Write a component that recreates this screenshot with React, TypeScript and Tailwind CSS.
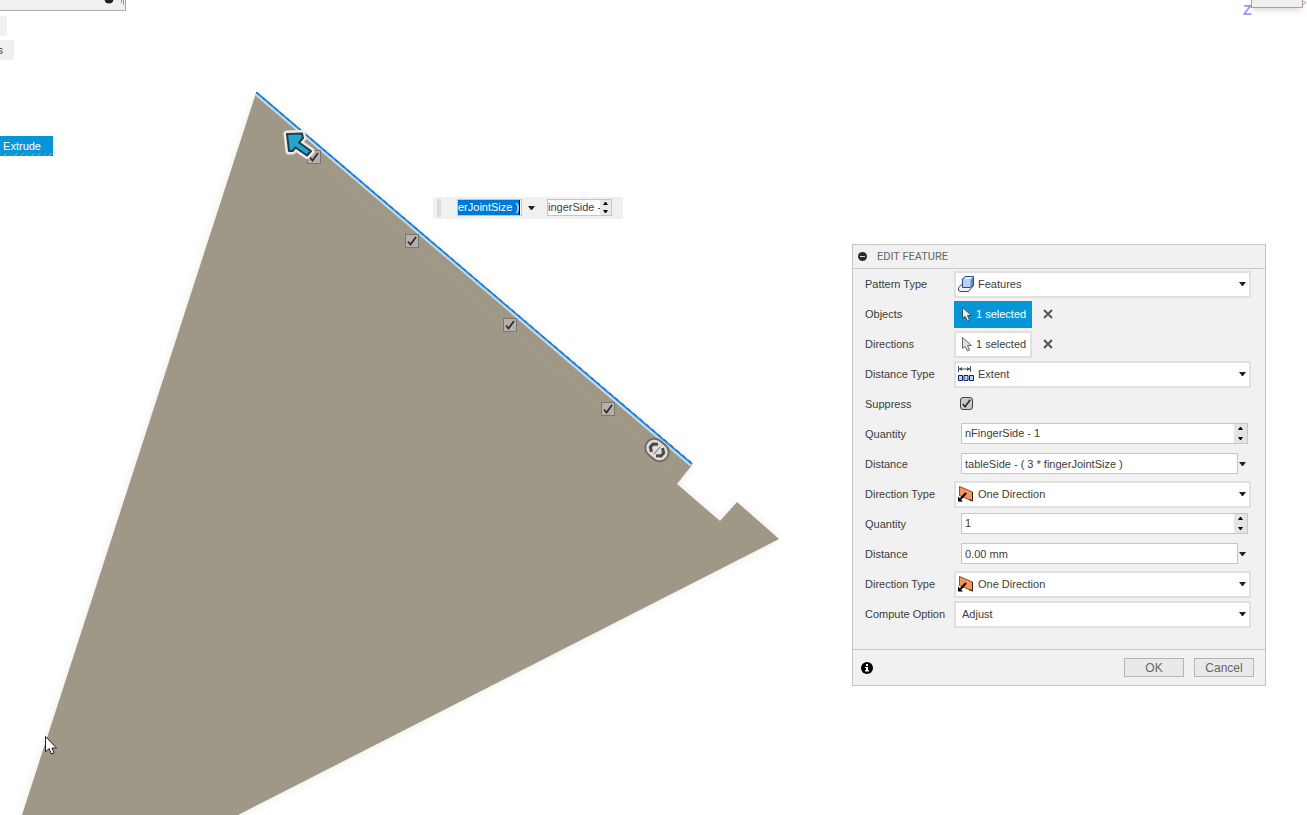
import { ReactNode, useState } from "react";

type RowProps = {
  label: string;
  id: string;
  children: ReactNode;
};

function Row({ label, id, children }: RowProps) {
  return (
    <div className="flex h-[30px] items-center">
      <label htmlFor={id} className="w-[89px] shrink-0">
        {label}
      </label>
      {children}
    </div>
  );
}

function DownArrow() {
  return (
    <svg width="7" height="4" viewBox="0 0 7 4" className="pointer-events-none">
      <path d="M0 0H7L4 4H3Z" fill="#222" />
    </svg>
  );
}

type DropdownProps = {
  id: string;
  value: string;
  icon?: ReactNode;
};

function Dropdown({ id, value, icon }: DropdownProps) {
  return (
    <div className="relative flex flex-1 items-center">
      <select
        id={id}
        className={
          icon
            ? "h-[27px] w-full appearance-none border-2 border-[#e0e0e0] bg-white pl-[22px] outline-none"
            : "h-[27px] w-full appearance-none border-2 border-[#e0e0e0] bg-white pl-1.5 outline-none"
        }
      >
        <option>{value}</option>
      </select>
      {icon && (
        <span className="pointer-events-none absolute left-1">{icon}</span>
      )}
      <span className="pointer-events-none absolute right-[5px]">
        <DownArrow />
      </span>
    </div>
  );
}

function Spinner({ name, className }: { name: string; className: string }) {
  return (
    <div className={`flex shrink-0 flex-col ${className}`}>
      <button
        type="button"
        aria-label={`Increase ${name}`}
        className="flex flex-1 items-center justify-center"
      >
        <svg width="5" height="3" viewBox="0 0 5 3">
          <path d="M2 0H3L5 3H0Z" fill="#000" />
        </svg>
      </button>
      <button
        type="button"
        aria-label={`Decrease ${name}`}
        className="flex flex-1 items-center justify-center"
      >
        <svg width="5" height="3" viewBox="0 0 5 3">
          <path d="M0 0H5L3 3H2Z" fill="#000" />
        </svg>
      </button>
    </div>
  );
}

function QuantityField({ id, initial }: { id: string; initial: string }) {
  const [value, setValue] = useState(initial);
  return (
    <div className="mr-[3px] mb-px ml-[7px] flex h-[21px] flex-1 border border-[#c6c6c6] bg-white">
      <input
        id={id}
        value={value}
        onChange={(e) => setValue(e.target.value)}
        className="min-w-0 flex-1 px-[3px] outline-none"
      />
      <Spinner name="quantity" className="w-[13px] bg-[#e4e4e4]" />
    </div>
  );
}

function DistanceField({ id, initial }: { id: string; initial: string }) {
  const [value, setValue] = useState(initial);
  return (
    <div className="mr-[5px] ml-[7px] flex flex-1 items-center gap-px">
      <input
        id={id}
        value={value}
        onChange={(e) => setValue(e.target.value)}
        className="mb-px h-[21px] min-w-0 flex-1 border border-[#c6c6c6] bg-white px-[3px] outline-none"
      />
      <button type="button" aria-label="Distance options">
        <DownArrow />
      </button>
    </div>
  );
}

function Selection({ id, active }: { id: string; active?: boolean }) {
  return (
    <div className="flex items-center gap-[11px]">
      <button
        id={id}
        type="button"
        className={
          active
            ? "flex h-[27px] w-[78px] items-center gap-1 border-2 border-[#0696d7] bg-[#0696d7] pl-1.5 text-white"
            : "flex h-[27px] w-[78px] items-center gap-1 border-2 border-[#e0e0e0] bg-white pl-1.5"
        }
      >
        <svg width="10" height="16" viewBox="0 0 10 16">
          <path
            d="M.5 1.5V12.500L3 10.300L5.500 15L7.500 14L5.500 9.500H9.500Z"
            fill={active ? "#f4f0ec" : "#e2dfe4"}
            stroke={active ? "#35526b" : "#66666e"}
          />
        </svg>
        <span className="whitespace-nowrap">1 selected</span>
      </button>
      <button type="button" aria-label="Clear selection">
        <svg width="10" height="10" viewBox="0 0 10 10">
          <path d="M1 1L9 9M9 1L1 9" stroke="#555" strokeWidth="2" />
        </svg>
      </button>
    </div>
  );
}

function FeaturesIcon() {
  return (
    <svg width="16" height="16" viewBox="0 0 16 16">
      <path d="M.5 14.5V11.5L5 7.500H13L15.5 9.500L10.500 15.5H2Z" fill="#eef1f6" stroke="#3d4652" />
      <path d="M4.5 3L7 .5H15.5V9L12.5 11.5H4.5Z" fill="#5f8fd0" stroke="#274a80" />
      <path d="M5 3.500H12.5V11H5Z" fill="#b4d3f7" />
      <path d="M7.5 1H15L12.5 3.500H5.5Z" fill="#e0edfc" />
    </svg>
  );
}

function ExtentIcon() {
  return (
    <svg width="16" height="16" viewBox="0 0 16 16" fill="none">
      <path d="M.5 0V6M12.500 0V6" stroke="#3b5166" />
      <path d="M1 3H12" stroke="#3b5166" strokeWidth="1" />
      <path d="M1 3L4 1V5ZM12 3L9 1V5Z" fill="#3b5166" />
      <path
        d="M.5 9.5H4.500V14.5H.5ZM6 9.5H10V14.5H6ZM11.500 9.5H15.5V14.5H11.500Z"
        fill="#b7d2f5"
        stroke="#10206b"
      />
    </svg>
  );
}

function DirectionIcon() {
  return (
    <svg width="16" height="16" viewBox="0 0 16 16">
      <path d="M1.5 .5L14.5 6V15L1.5 9.5Z" fill="#f3945c" stroke="#8d4a25" />
      <path d="M14.5 6V15L11 13.5" fill="none" stroke="#2b1a10" />
      <path d="M8 7L2.5 13" stroke="#000" strokeWidth="2" />
      <path d="M0 15.5V10.5L5 15.5Z" fill="#000" />
    </svg>
  );
}

type CheckBoxProps = {
  id?: string;
  label: string;
  className: string;
};

function CheckBox({ id, label, className }: CheckBoxProps) {
  return (
    <span className={className}>
      <input
        id={id}
        type="checkbox"
        defaultChecked
        aria-label={label}
        className="peer block size-full appearance-none"
      />
      <svg
        viewBox="0 0 12 12"
        className="pointer-events-none absolute inset-0 hidden size-full peer-checked:block"
      >
        <path d="M2 6.5L4.500 9.5L10 2" fill="none" stroke="#2e2e2e" strokeWidth="1.8" />
      </svg>
    </span>
  );
}

const instances = [
  { left: 307, top: 150 },
  { left: 405, top: 234 },
  { left: 503, top: 318 },
  { left: 601, top: 402 },
];

function Canvas() {
  return (
    <>
      <svg className="absolute inset-0 size-full" aria-hidden="true">
        <defs>
          <filter id="edge-shadow" x="-5%" y="-5%" width="110%" height="110%">
            <feGaussianBlur stdDeviation="4" />
          </filter>
        </defs>
        <path
          d="M256 93L692 465L677 484L720 521L737 502L779 539L238 815L180 845H12L22 815Z"
          fill="#a09888"
          opacity=".22"
          filter="url(#edge-shadow)"
        />
        <path
          d="M256 93L692 465L677 484L720 521L737 502L779 539L238 815L180 845H12L22 815Z"
          fill="#a09887"
        />
        <path d="M320 163L672 469" stroke="#a69e8e" strokeWidth="1" />
        <path d="M256 94L691 465" stroke="#c9dbe6" strokeWidth="3" />
        <path d="M256.500 92.500L692 464" stroke="#2a8ce0" strokeWidth="2" />
        <path
          d="M256 92L692 463"
          stroke="#1263b5"
          strokeWidth="1"
          strokeDasharray="4 4"
        />
        <g transform="rotate(40 657 450)">
          <rect x="644.500" y="441" width="25" height="18" rx="9" fill="#deddda" stroke="#716d66" strokeWidth="2" />
          <path
            d="M654 445L650 448V452L654 455M660 445L664 448V452L660 455"
            fill="none"
            stroke="#494949"
            strokeWidth="3"
          />
        </g>
        <path d="M654 454L660 447" stroke="#666" />
      </svg>
      {instances.map((pos, i) => (
        <span key={i} className="absolute" style={pos}>
          <CheckBox
            label={`Instance ${i + 2}`}
            className="relative block size-3.5 border border-[#7a766f] bg-[#b5b1aa]"
          />
        </span>
      ))}
      <svg
        className="pointer-events-none absolute top-[126px] left-[280px]"
        width="40"
        height="36"
        viewBox="280 126 40 36"
        aria-hidden="true"
      >
        <g strokeLinejoin="round">
          <path
            d="M287 134L302 133.500L303 138L299 142.500L311 151L307 155.500L295.500 147.500L292.500 151H289Z"
            fill="#f1e9e4"
            stroke="#f1e9e4"
            strokeWidth="7"
          />
          <path
            d="M287 134L302 133.500L303 138L299 142.500L311 151L307 155.500L295.500 147.500L292.500 151H289Z"
            fill="#27a3cd"
            stroke="#17414f"
            strokeWidth="2"
          />
        </g>
      </svg>
      <svg
        className="pointer-events-none absolute top-[735px] left-[44px]"
        width="14"
        height="20"
        viewBox="0 0 14 20"
        aria-hidden="true"
      >
        <path
          d="M1.500 1.500V17L5 13.500L7.500 19L10 18L8 13H12.500Z"
          fill="#fff"
          stroke="#222"
        />
      </svg>
    </>
  );
}

function FloatingInput() {
  const [distance, setDistance] = useState("erJointSize )");
  const [quantity, setQuantity] = useState("ingerSide - 1");
  return (
    <div className="absolute top-[197px] left-[433px] flex h-[22px] w-[190px] items-center bg-[#f0f0f0]">
      <div className="ml-1 h-[18px] w-1 bg-[radial-gradient(#dcdcdc_1px,transparent_1px)] bg-[length:2px_3px]" />
      <div className="mb-px ml-4 flex h-[17px] w-[65px] border border-[#c6c6c6] bg-white">
        <input
          aria-label="Distance"
          value={distance}
          onChange={(e) => setDistance(e.target.value)}
          className="w-[62px] border-r border-black bg-[#0078d7] text-white outline-none"
        />
      </div>
      <button type="button" aria-label="Distance options" className="ml-1.5">
        <DownArrow />
      </button>
      <div className="mb-px ml-3 flex h-[17px] w-[65px] border border-[#c6c6c6] bg-white">
        <input
          aria-label="Quantity"
          value={quantity}
          onChange={(e) => setQuantity(e.target.value)}
          className="w-[52px] outline-none"
        />
        <Spinner name="quantity" className="flex-1 bg-[#e9e9e9]" />
      </div>
    </div>
  );
}

function Browser() {
  return (
    <div className="absolute top-0 left-0">
      <div className="relative h-[11px] w-[126px] overflow-hidden border-r border-b border-[#aaa] bg-[#f0f0f0]">
        <svg className="absolute top-0 right-0" width="22" height="10" viewBox="0 0 22 10">
          <circle cx="6" cy="-1" r="4.5" fill="#222" />
          <path d="M18.500 0V3M20.500 0V5" stroke="#999" />
        </svg>
      </div>
      <div className="mt-[5px] h-5 w-[7px] bg-[#f0f0f0]" />
      <div className="mt-1 flex h-5 w-3.5 items-center justify-end overflow-hidden bg-[#f0f0f0] pr-[11px]">
        s
      </div>
      <div className="relative mt-[76px] flex h-5 w-[53px] items-center justify-end overflow-hidden bg-[#0696d7] pr-3 whitespace-nowrap text-white">
        e Extrude
        <div className="absolute inset-x-0 bottom-0 h-[3px] bg-[repeating-linear-gradient(135deg,#5b9fc4_0_1px,transparent_1px_4px)]" />
      </div>
    </div>
  );
}

function ViewCube() {
  return (
    <div className="absolute top-0 right-0 flex w-16 overflow-hidden">
      <span className="w-2 pt-1 text-sm leading-3 font-bold text-[#9a97ee]">Z</span>
      <div className="mb-3 h-2 w-[52px] border-r border-b border-l border-[#a2a2a2] bg-[#f0f0f0] shadow-md" />
      <svg width="4" height="8" viewBox="0 0 4 8">
        <path d="M0 1L3 4M3 1L0 5" stroke="#e79a9a" />
      </svg>
    </div>
  );
}

function EditFeature() {
  return (
    <form
      onSubmit={(e) => e.preventDefault()}
      className="absolute top-[244px] right-[41px] w-[414px] border border-[#c4c4c4] bg-[#f1f1f1] text-[#3c3c3c]"
    >
      <header className="flex h-6 items-center gap-2.5 border-b border-[#c8c8c8] pl-[5px]">
        <svg width="9" height="9" viewBox="0 0 9 9">
          <circle cx="4.5" cy="4.5" r="4.5" fill="#2b2b2b" />
          <path d="M2 4.500H7" stroke="#ddd" />
        </svg>
        <h1 className="font-[Roboto] text-[11px] text-[#666]">EDIT FEATURE</h1>
      </header>
      <div className="pr-3.5 pb-5 pl-3">
        <Row label="Pattern Type" id="pattern-type">
          <Dropdown id="pattern-type" value="Features" icon={<FeaturesIcon />} />
        </Row>
        <Row label="Objects" id="objects">
          <Selection id="objects" active />
        </Row>
        <Row label="Directions" id="directions">
          <Selection id="directions" />
        </Row>
        <Row label="Distance Type" id="distance-type">
          <Dropdown id="distance-type" value="Extent" icon={<ExtentIcon />} />
        </Row>
        <Row label="Suppress" id="suppress">
          <CheckBox
            id="suppress"
            label="Suppress"
            className="relative mb-px ml-1.5 block size-[13px] rounded-[3px] border border-[#444] bg-[#c9c9c9]"
          />
        </Row>
        <Row label="Quantity" id="quantity-1">
          <QuantityField id="quantity-1" initial="nFingerSide - 1" />
        </Row>
        <Row label="Distance" id="distance-1">
          <DistanceField id="distance-1" initial="tableSide - ( 3 * fingerJointSize )" />
        </Row>
        <Row label="Direction Type" id="direction-type-1">
          <Dropdown id="direction-type-1" value="One Direction" icon={<DirectionIcon />} />
        </Row>
        <Row label="Quantity" id="quantity-2">
          <QuantityField id="quantity-2" initial="1" />
        </Row>
        <Row label="Distance" id="distance-2">
          <DistanceField id="distance-2" initial="0.00 mm" />
        </Row>
        <Row label="Direction Type" id="direction-type-2">
          <Dropdown id="direction-type-2" value="One Direction" icon={<DirectionIcon />} />
        </Row>
        <Row label="Compute Option" id="compute-option">
          <Dropdown id="compute-option" value="Adjust" />
        </Row>
      </div>
      <footer className="flex h-9 items-center gap-2.5 border-t border-[#c8c8c8] pr-[11px] pl-2">
        <button type="button" aria-label="Information" className="mr-auto">
          <svg width="12" height="12" viewBox="0 0 12 12">
            <circle cx="6" cy="6" r="6" fill="#000" />
            <path d="M5 2H7V4H5ZM4 5H7V8H8V9.500H4V8H5V6H4Z" fill="#fff" />
          </svg>
        </button>
        <button
          type="submit"
          className="h-[19px] w-[60px] border border-[#b5b5b5] bg-[#e9e9e9] text-xs leading-4 text-[#666]"
        >
          OK
        </button>
        <button
          type="button"
          className="h-[19px] w-[60px] border border-[#b5b5b5] bg-[#e9e9e9] text-xs leading-4 text-[#666]"
        >
          Cancel
        </button>
      </footer>
    </form>
  );
}

export default function App() {
  return (
    <main className="relative h-screen overflow-hidden bg-white font-['Liberation_Sans',Arial,sans-serif] text-[11px] leading-[15px] text-[#3c3c3c]">
      <Canvas />
      <Browser />
      <ViewCube />
      <FloatingInput />
      <EditFeature />
    </main>
  );
}
